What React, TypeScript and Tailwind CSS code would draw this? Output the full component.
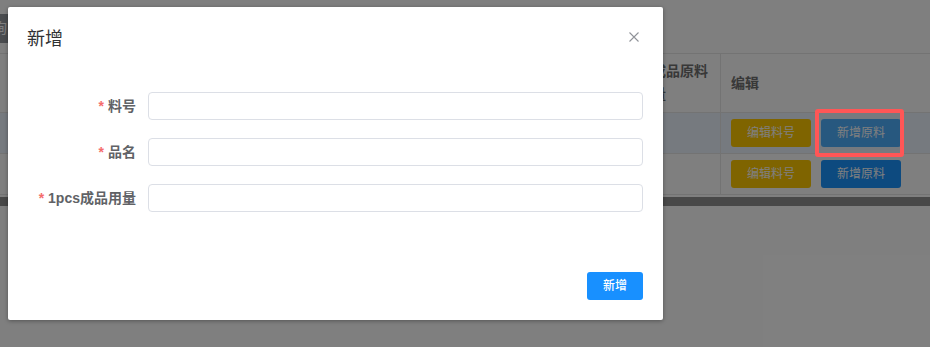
import { useState } from 'react';

const font = { fontFamily: '"Liberation Sans", "Noto Sans CJK SC", sans-serif' };

const fields = ['料号', '品名', '1pcs成品用量'];

const TableRow = ({ hover, marked }: { hover?: boolean; marked?: boolean }) => (
  <div className={`flex h-[41px] border-b border-[#e6e6e6] ${hover ? 'bg-[#ecf5ff]' : 'bg-white'}`}>
    <div className="flex-1" />
    <div className="w-[210px] border-l border-[#e6e6e6] flex items-center pl-[10px] gap-[10px]">
      <button className="w-[80px] h-[28px] rounded-[3px] bg-[#ffc800] text-white text-xs">编辑料号</button>
      <div className="relative">
        <button className={`w-[80px] h-[28px] rounded-[3px] text-white text-xs ${hover ? 'bg-[#4fb0ff]' : 'bg-[#1a94ff]'}`}>
          新增原料
        </button>
        {marked && (
          <div className="absolute -top-[10px] -left-[6px] w-[89px] h-[48px] border-4 border-[#ff5656] rounded-[3px] z-20" />
        )}
      </div>
    </div>
  </div>
);

export default function App() {
  const [values, setValues] = useState(['', '', '']);

  return (
    <div className="relative w-[930px] h-[347px] overflow-hidden bg-white" style={font}>
      {/* 背景页面 */}
      <div className="h-[53px] pt-[14px]">
        <div className="w-[8px] h-[29px] bg-[#95999f] overflow-hidden text-white text-sm leading-[29px] whitespace-nowrap">
          <span className="-ml-[7px]">询</span>
        </div>
      </div>
      <div className="border-t border-[#e6e6e6]">
        <div className="flex h-[59px] border-b border-[#e6e6e6] text-sm font-bold text-[#707070]">
          <div className="flex-1" />
          <div className="w-[92px] pl-[10px] flex flex-col justify-center leading-[23px]">
            <span>每成品原料</span>
            <span>用量</span>
          </div>
          <div className="w-[210px] border-l border-[#e6e6e6] flex items-center pl-[10px]">编辑</div>
        </div>
        <TableRow hover marked />
        <TableRow />
      </div>
      <div className="mt-[2px] h-[9px] bg-[#909090]" />

      {/* 遮罩 */}
      <div className="absolute inset-0 bg-black/50 z-10" />

      {/* 弹窗 */}
      <div className="absolute left-[8px] top-[7px] w-[655px] h-[313px] bg-white rounded-[2px] shadow-[0_1px_4px_rgba(0,0,0,0.35)] z-30 flex flex-col">
        <div className="relative pt-[20px] pb-[10px] pl-[19px]">
          <span className="text-lg leading-[24px] text-[#303133]">新增</span>
          <svg className="absolute right-[24px] top-[25px]" width="10" height="10" viewBox="0 0 10 10">
            <path d="M0.5 0.5 L9.5 9.5 M9.5 0.5 L0.5 9.5" stroke="#909399" strokeWidth="1.1" />
          </svg>
        </div>
        <div className="pt-[30px] pr-[20px] pl-[20px] flex flex-col gap-[18px]">
          {fields.map((label, i) => (
            <div key={label} className="flex items-center h-[28px]">
              <label className="w-[120px] pr-[12px] text-right text-sm font-bold text-[#606266]">
                <span className="text-[#f56c6c] mr-[4px]">*</span>
                {label}
              </label>
              <input
                value={values[i]}
                onChange={(e) => setValues(values.map((v, j) => (j === i ? e.target.value : v)))}
                className="flex-1 h-[28px] border border-[#dcdfe6] rounded-[4px] px-[15px] text-sm outline-none"
              />
            </div>
          ))}
        </div>
        <div className="mt-auto flex justify-end pr-[20px] pb-[20px]">
          <button className="w-[56px] h-[28px] rounded-[3px] bg-[#1890ff] text-white text-xs font-medium">新增</button>
        </div>
      </div>
    </div>
  );
}
